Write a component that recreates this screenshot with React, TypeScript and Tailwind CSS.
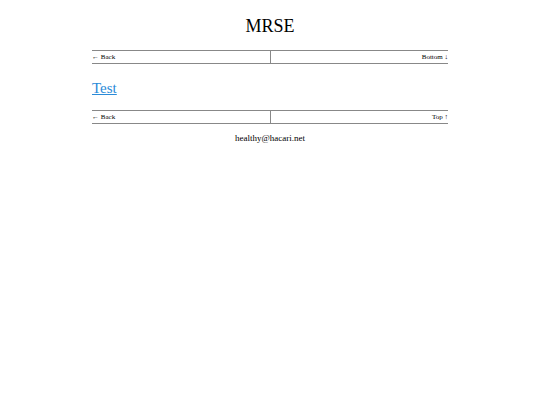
export default function App() {
  return (
    <div className="w-[540px] h-[405px] bg-white text-black" style={{ fontFamily: '"Liberation Serif", serif' }}>
      <div className="pt-[14px] text-center text-[18px] leading-[24px]">MRSE</div>
      <div className="mx-auto w-[356px]">
        <div className="mt-[12px] flex h-[14px] border-y border-[#888] text-[7px] leading-[12px]">
          <div className="flex-1 border-r border-[#888] pl-0">← Back</div>
          <div className="flex-1 text-right">Bottom ↓</div>
        </div>
        <div className="mt-[14px] text-[15px] leading-[20px]">
          <a href="#" className="text-[#2a8bd8] underline">Test</a>
        </div>
        <div className="mt-[12px] flex h-[14px] border-y border-[#888] text-[7px] leading-[12px]">
          <div className="flex-1 border-r border-[#888]">← Back</div>
          <div className="flex-1 text-right">Top ↑</div>
        </div>
      </div>
      <div className="mt-[8px] text-center text-[9px] leading-[12px]">healthy@hacari.net</div>
    </div>
  );
}
